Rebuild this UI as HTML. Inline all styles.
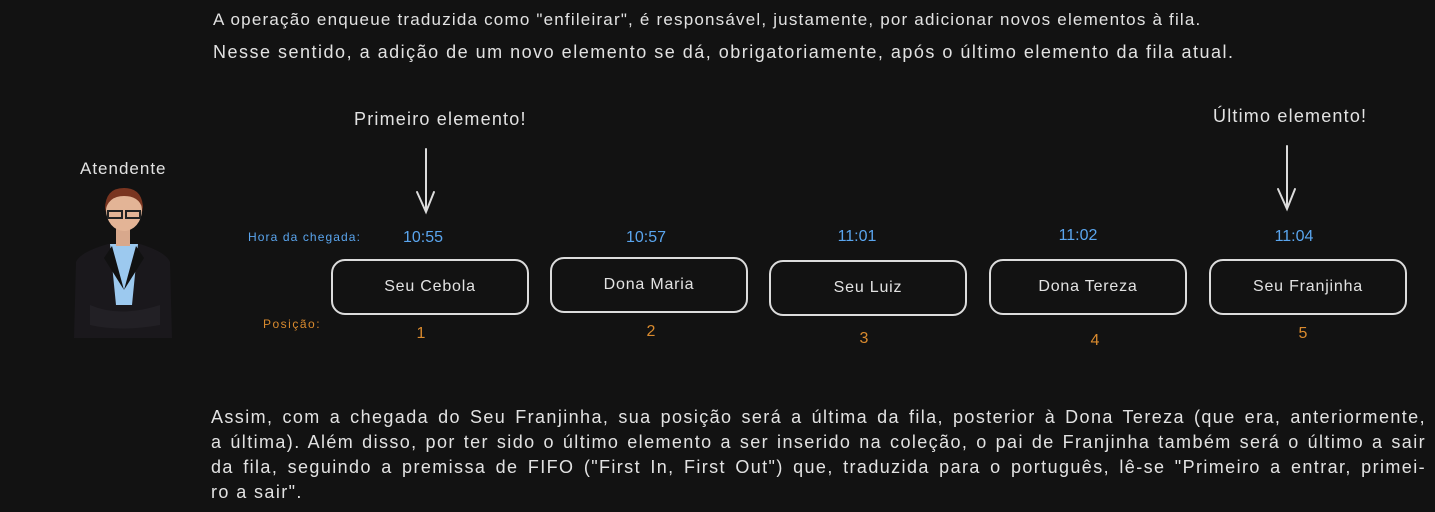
<!DOCTYPE html>
<html><head><meta charset="utf-8"><style>
body{margin:0;width:1435px;height:512px;background:#121212;position:relative;overflow:hidden;font-family:"Liberation Sans",sans-serif;color:#e2e2e2}
.t{position:absolute;white-space:nowrap}
.box{position:absolute;width:198px;height:56px;border:2px solid #dcdcdc;border-radius:14px;box-sizing:border-box;display:flex;align-items:center;justify-content:center;font-size:16px;letter-spacing:0.8px}
.time{position:absolute;color:#5aa5ee;font-size:16px;text-align:center;width:80px}
.pos{position:absolute;color:#d98a2e;font-size:16px;text-align:center;width:40px}
.j{display:block;width:1215px;text-align:justify;text-align-last:justify;height:25px}
</style></head><body>
<div class="t" style="left:213px;top:10px;font-size:17px;letter-spacing:1.2px">A operação enqueue traduzida como "enfileirar", é responsável, justamente, por adicionar novos elementos à fila.</div>
<div class="t" style="left:213px;top:42px;font-size:18px;letter-spacing:1.5px">Nesse sentido, a adição de um novo elemento se dá, obrigatoriamente, após o último elemento da fila atual.</div>
<div class="t" style="left:354px;top:109px;font-size:18px;letter-spacing:1.2px">Primeiro elemento!</div>
<div class="t" style="left:1213px;top:106px;font-size:18px;letter-spacing:1.2px">Último elemento!</div>
<svg style="position:absolute;left:0;top:0" width="1435" height="512">
<g stroke="#dcdcdc" stroke-width="2" fill="none" stroke-linecap="round">
<path d="M426 149 L426 212 M417 192 L426 212 L434 192"/>
<path d="M1287 146 L1287 209 M1278 189 L1287 209 L1295 189"/>
</g>
<path d="M76 262 Q80 252 108 244 L140 244 Q166 252 170 262 L172 338 L74 338 Z" fill="#1a181c"/>
<path d="M110 244 L138 244 L132 305 L116 305 Z" fill="#9cc9ef"/>
<path d="M112 246 L124 290 L104 258 Z M136 246 L124 290 L144 258 Z" fill="#111"/>
<rect x="116" y="228" width="14" height="18" fill="#d8a88c"/>
<ellipse cx="124" cy="210" rx="18" ry="21" fill="#e3b496"/>
<path d="M105 212 Q104 188 124 188 Q144 188 143 212 Q141 196 124 196 Q108 196 105 212Z" fill="#7a3520"/>
<rect x="108" y="211" width="14" height="7" fill="none" stroke="#222" stroke-width="2"/>
<rect x="126" y="211" width="14" height="7" fill="none" stroke="#222" stroke-width="2"/>
<path d="M90 305 Q120 318 160 305 L160 325 Q120 332 90 325Z" fill="#222025"/>
</svg>
<div class="t" style="left:80px;top:159px;font-size:17px;letter-spacing:1px">Atendente</div>
<div class="t" style="left:248px;top:230px;font-size:12px;letter-spacing:1.1px;color:#5aa5ee">Hora da chegada:</div>
<div class="t" style="left:263px;top:317px;font-size:12px;letter-spacing:1.5px;color:#d98a2e">Posição:</div>
<div class="time" style="left:383px;top:229px">10:55</div>
<div class="time" style="left:606px;top:229px">10:57</div>
<div class="time" style="left:817px;top:228px">11:01</div>
<div class="time" style="left:1038px;top:227px">11:02</div>
<div class="time" style="left:1254px;top:228px">11:04</div>
<div class="box" style="left:331px;top:259px">Seu Cebola</div>
<div class="box" style="left:550px;top:257px">Dona Maria</div>
<div class="box" style="left:769px;top:260px">Seu Luiz</div>
<div class="box" style="left:989px;top:259px">Dona Tereza</div>
<div class="box" style="left:1209px;top:259px">Seu Franjinha</div>
<div class="pos" style="left:401px;top:325px">1</div>
<div class="pos" style="left:631px;top:323px">2</div>
<div class="pos" style="left:844px;top:330px">3</div>
<div class="pos" style="left:1075px;top:332px">4</div>
<div class="pos" style="left:1283px;top:325px">5</div>
<div class="t" style="left:211px;top:405px;font-size:18px;line-height:25px;letter-spacing:1.4px">
<span class="j">Assim, com a chegada do Seu Franjinha, sua posição será a última da fila, posterior à Dona Tereza (que era, anteriormente,</span>
<span class="j">a última). Além disso, por ter sido o último elemento a ser inserido na coleção, o pai de Franjinha também será o último a sair</span>
<span class="j">da fila, seguindo a premissa de FIFO ("First In, First Out") que, traduzida para o português, lê-se "Primeiro a entrar, primei-</span>
<span style="display:block">ro a sair".</span>
</div>
</body></html>
